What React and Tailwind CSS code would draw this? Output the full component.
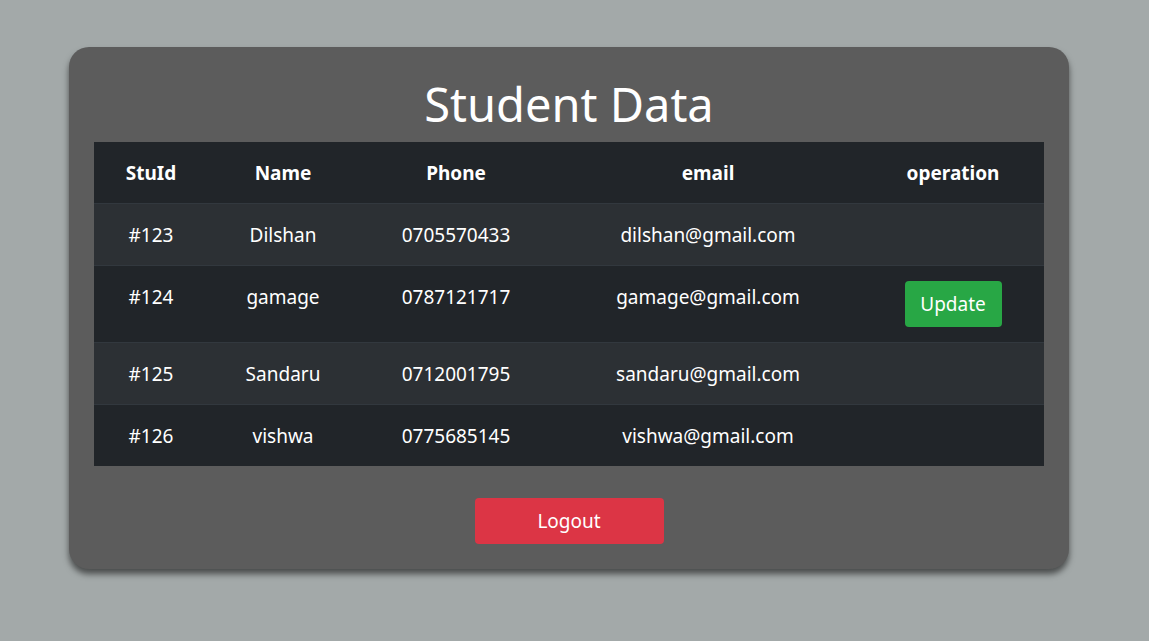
import React from "react";

const rows = [
  { id: "#123", name: "Dilshan", phone: "0705570433", email: "dilshan@gmail.com", pad: "pt-[15px] pb-[14px]" },
  { id: "#124", name: "gamage", phone: "0787121717", email: "gamage@gmail.com", update: true, pad: "pt-[15px] pb-[15px]" },
  { id: "#125", name: "Sandaru", phone: "0712001795", email: "sandaru@gmail.com", pad: "pt-[15px] pb-[14px]" },
  { id: "#126", name: "vishwa", phone: "0775685145", email: "vishwa@gmail.com", pad: "pt-[15px] pb-[14px]" },
];

export default function App() {
  return (
    <div
      className="min-h-[641px] w-full bg-[#a3a9a9] pt-[47px]"
      style={{ fontFamily: '"Noto Sans", "Open Sans", sans-serif' }}
    >
      <div className="ml-[69px] w-[1000px] rounded-[20px] bg-[#5c5c5c] px-[25px] pb-[25px] shadow-[0_5px_6px_rgba(0,0,0,0.55)]">
        <h1 className="pt-[28px] pb-[9px] text-center text-[47px] leading-[58px] text-white">Student Data</h1>
        <table className="w-[950px] table-fixed border-collapse text-white text-[19px] leading-[32px]">
          <colgroup>
            <col className="w-[114px]" />
            <col className="w-[150px]" />
            <col className="w-[196px]" />
            <col className="w-[308px]" />
            <col className="w-[182px]" />
          </colgroup>
          <thead>
            <tr className="bg-[#212529] font-bold text-[19px] leading-[30px]">
              <th className="px-4 pt-[16px] pb-[15px] text-center align-top">StuId</th>
              <th className="px-4 pt-[16px] pb-[15px] text-center align-top">Name</th>
              <th className="px-4 pt-[16px] pb-[15px] text-center align-top">Phone</th>
              <th className="px-4 pt-[16px] pb-[15px] text-center align-top">email</th>
              <th className="px-4 pt-[16px] pb-[15px] text-center align-top">operation</th>
            </tr>
          </thead>
          <tbody>
            {rows.map((r, i) => (
              <tr
                key={r.id}
                className={`border-t border-[#32383e] ${i % 2 === 0 ? "bg-[#2c3034]" : "bg-[#212529]"}`}
              >
                <td className={`px-4 ${r.pad} text-center align-top`}>{r.id}</td>
                <td className={`px-4 ${r.pad} text-center align-top`}>{r.name}</td>
                <td className={`px-4 ${r.pad} text-center align-top`}>{r.phone}</td>
                <td className={`px-4 ${r.pad} text-center align-top`}>{r.email}</td>
                <td className={`px-4 ${r.pad} text-center align-top`}>
                  {r.update ? (
                    <button className="block mx-auto h-[46px] w-[97px] rounded-[4px] bg-[#28a745] text-[19px] leading-[30px] text-white">
                      Update
                    </button>
                  ) : null}
                </td>
              </tr>
            ))}
          </tbody>
        </table>
        <div className="mt-[32px] flex justify-center">
          <button className="h-[46px] w-[189px] rounded-[4px] bg-[#dc3545] text-[19px] leading-[30px] text-white">
            Logout
          </button>
        </div>
      </div>
    </div>
  );
}
